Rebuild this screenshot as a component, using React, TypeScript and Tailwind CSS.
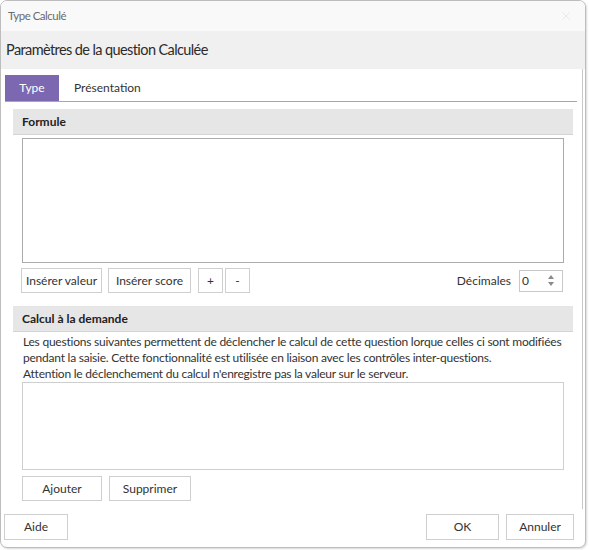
import { X } from "lucide-react";

const font = { fontFamily: "Lato, 'Noto Sans', sans-serif" };

function Btn({ label, className = "" }: { label: string; className?: string }) {
  return (
    <button
      className={`h-[25px] shrink-0 border border-[#cfcfcf] bg-white text-[12px] text-[#333] flex items-center justify-center ${className}`}
    >
      {label}
    </button>
  );
}

function SectionHead({ title }: { title: string }) {
  return (
    <div className="ml-[12px] mr-[9px] h-[26px] bg-[#e6e6e6] border-b border-[#d4d4d4] flex items-center pl-[9px] text-[12px] font-bold text-[#222]">
      {title}
    </div>
  );
}

export default function App() {
  return (
    <div className="w-[589px] h-[550px] bg-white" style={font}>
      <div className="w-[586px] h-[548px] border border-[#bdbdbd] rounded-[7px] overflow-hidden flex flex-col bg-white shadow-[1px_1px_2px_rgba(0,0,0,0.15)]">
        {/* title bar */}
        <div className="h-[30px] shrink-0 bg-[#f9f9f9] flex items-center justify-between pl-[7px] pr-[12px]">
          <span className="text-[11.5px] tracking-[-0.5px] text-[#6b6b6b]">Type Calculé</span>
          <X className="w-[14px] h-[14px] text-[#e6e6e6]" strokeWidth={1.5} />
        </div>
        {/* header */}
        <div className="h-[38px] shrink-0 bg-[#f0f0f0] flex items-center pl-[5px] text-[14.5px] tracking-[-0.6px] text-[#2b2b2b]">
          Paramètres de la question Calculée
        </div>

        <div className="h-[440px] shrink-0 flex flex-col border-r border-[#c8c8c8] mr-[2px]">
          {/* tabs */}
          <div className="mt-[6px] ml-[4px] mr-[5px] flex border-b border-[#a99ed0]">
            <div className="w-[54px] h-[26px] bg-[#7b68b0] text-white text-[12px] flex items-center justify-center">
              Type
            </div>
            <div className="h-[26px] px-[15px] text-[12px] text-[#333] flex items-center">
              Présentation
            </div>
          </div>

          <div className="mt-[7px]">
            <SectionHead title="Formule" />
          </div>
          <div className="ml-[21px] mr-[18px] mt-[3px] h-[125px] shrink-0 border border-[#ababab] bg-white" />

          <div className="mt-[5px] ml-[20px] mr-[19px] flex items-center">
            <Btn label="Insérer valeur" className="w-[81px]" />
            <Btn label="Insérer score" className="w-[83px] ml-[6px]" />
            <Btn label="+" className="w-[25px] ml-[7px]" />
            <Btn label="-" className="w-[25px] ml-[2px]" />
            <span className="ml-auto text-[12px] text-[#333]">Décimales</span>
            <div className="ml-[8px] w-[44px] h-[22px] border border-[#c8c8c8] flex items-center pl-[2px] text-[12px] text-[#333]">
              <span className="flex-1">0</span>
              <div className="flex flex-col items-center pr-[8px] leading-none">
                <svg width="6" height="4" viewBox="0 0 6 4">
                  <path d="M0 4 L3 0 L6 4 Z" fill="#8a8a8a" />
                </svg>
                <svg width="6" height="4" viewBox="0 0 6 4" className="mt-[3px]">
                  <path d="M0 0 L3 4 L6 0 Z" fill="#8a8a8a" />
                </svg>
              </div>
            </div>
          </div>

          <div className="mt-[13px]">
            <SectionHead title="Calcul à la demande" />
          </div>
          <div className="ml-[22px] mt-[2px] text-[12px] leading-[16px] text-[#333] whitespace-nowrap tracking-[-0.23px]">
            <div>Les questions suivantes permettent de déclencher le calcul de cette question lorque celles ci sont modifiées</div>
            <div>pendant la saisie. Cette fonctionnalité est utilisée en liaison avec les contrôles inter-questions.</div>
            <div>Attention le déclenchement du calcul n'enregistre pas la valeur sur le serveur.</div>
          </div>
          <div className="ml-[21px] mr-[18px] mt-[0px] h-[88px] shrink-0 border border-[#cfcfcf] bg-white" />

          <div className="mt-[6px] ml-[21px] flex">
            <Btn label="Ajouter" className="w-[80px]" />
            <Btn label="Supprimer" className="w-[82px] ml-[7px]" />
          </div>
        </div>

        {/* footer */}
        <div className="flex-1 flex items-start pt-[5px] pl-[3px] pr-[11px]">
          <Btn label="Aide" className="w-[64px] h-[26px]" />
          <Btn label="OK" className="w-[73px] h-[26px] ml-auto border-[#a99ed0]" />
          <Btn label="Annuler" className="w-[68px] h-[26px] ml-[7px]" />
        </div>
      </div>
    </div>
  );
}
